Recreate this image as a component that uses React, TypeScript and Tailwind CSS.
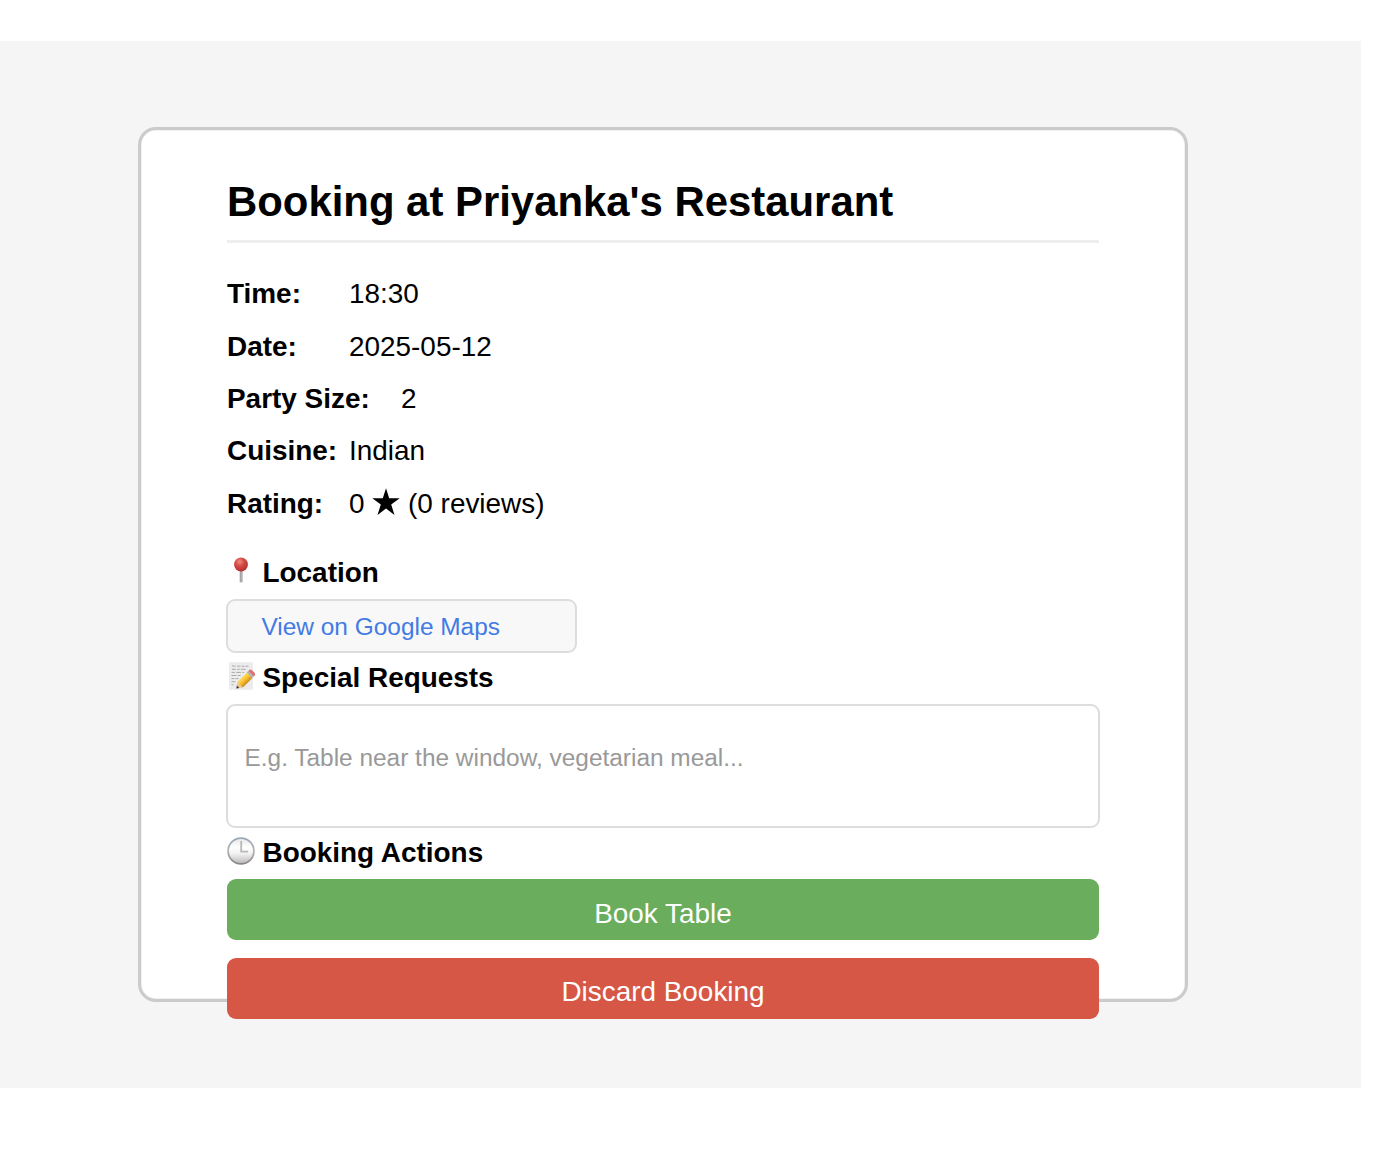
import type { ReactNode } from "react";

const details = [
  { label: "Time:", value: "18:30", wide: false },
  { label: "Date:", value: "2025-05-12", wide: false },
  { label: "Party Size:", value: "2", wide: true },
  { label: "Cuisine:", value: "Indian", wide: false },
];

function Row({ label, wide, children }: { label: string; wide?: boolean; children: ReactNode }) {
  return (
    <div className="flex h-[52.35px] items-center whitespace-pre">
      <dt className={wide ? "w-[174px] font-bold" : "w-[122px] font-bold"}>{label}</dt>
      <dd className="flex items-center">{children}</dd>
    </div>
  );
}

function Heading({ icon, children }: { icon: ReactNode; children: ReactNode }) {
  return (
    <h2 className="flex h-[49.5px] items-center font-bold">
      <span className="w-[35.5px] shrink-0">{icon}</span>
      {children}
    </h2>
  );
}

function PinIcon() {
  return (
    <svg width="28" height="28" viewBox="0 0 28 28" className="-translate-y-px">
      <defs>
        <radialGradient id="pin" cx="0.4" cy="0.3" r="0.7">
          <stop offset="0" stopColor="#ee8c84" />
          <stop offset="0.45" stopColor="#d54c46" />
          <stop offset="1" stopColor="#b5302f" />
        </radialGradient>
        <linearGradient id="needle">
          <stop offset="0" stopColor="#777" />
          <stop offset="0.5" stopColor="#ccc" />
          <stop offset="1" stopColor="#777" />
        </linearGradient>
      </defs>
      <path d="M12.8 12h2.6v12.5L14.1 26l-1.3-1.5z" fill="url(#needle)" />
      <circle cx="14" cy="7.5" r="6.9" fill="url(#pin)" />
    </svg>
  );
}

function MemoIcon() {
  return (
    <svg width="28" height="28" viewBox="0 0 28 28" className="-translate-y-px">
      <defs>
        <linearGradient id="pencil" x1="0" y1="0" x2="0" y2="1">
          <stop offset="0" stopColor="#ffdc60" />
          <stop offset="0.5" stopColor="#f8c02e" />
          <stop offset="1" stopColor="#c98a1c" />
        </linearGradient>
      </defs>
      <rect x="2" y="0.3" width="24" height="27.5" rx="0.6" fill="#ececec" />
      <path
        d="M5 4.2l1-.5 1 .6 1.5-.4M10 4.2h3.5m1 0h3m1 0h3M5 7.3h4m1.2 0h2.6m1 0h5M4.5 10.4h3.4m1.2 0h5m1.2 0h2M4.5 13.5h5m1.2 0h3M4.5 16.6h3m1 0h3M4.5 19.7h4M4.5 22.8h2"
        stroke="#aaa"
        strokeWidth="1"
        fill="none"
      />
      <g transform="translate(9.4 26.4) rotate(-45)">
        <path d="M0 0l5.5-3.9v7.8z" fill="#ecc796" />
        <path d="M0 0l2.4-1.7v3.4z" fill="#333" />
        <rect x="5.2" y="-3.9" width="13.5" height="7.8" fill="url(#pencil)" />
        <rect x="18.5" y="-3.9" width="2.2" height="7.8" fill="#adb4b8" />
        <path d="M20.7 -3.9h1.2q2 0 2 2v3.8q0 2-2 2h-1.2z" fill="#e0716e" />
      </g>
    </svg>
  );
}

function ClockIcon() {
  return (
    <svg width="28" height="28" viewBox="0 0 28 28" className="-translate-y-px">
      <defs>
        <linearGradient id="rim" x1="0" y1="0" x2="0" y2="1">
          <stop offset="0" stopColor="#9aa8b8" />
          <stop offset="0.5" stopColor="#b4b4b4" />
          <stop offset="1" stopColor="#8c8784" />
        </linearGradient>
        <linearGradient id="face" x1="0" y1="0" x2="0" y2="1">
          <stop offset="0" stopColor="#e4e6e8" />
          <stop offset="0.35" stopColor="#fff" />
          <stop offset="0.6" stopColor="#f2f2f2" />
          <stop offset="1" stopColor="#b8b8b8" />
        </linearGradient>
      </defs>
      <circle cx="14" cy="14" r="12.9" fill="url(#face)" stroke="url(#rim)" strokeWidth="1.8" />
      <path d="M14.2 4v10.6h6.8" fill="none" stroke="#b8b8b8" strokeWidth="1.8" />
    </svg>
  );
}

export default function App() {
  return (
    <div className="h-[1154px] bg-white pt-[41px] font-['Liberation_Sans',Arial,sans-serif] text-[27.92px] leading-none text-black">
      <main className="h-[1047px] w-[1361px] bg-[#f5f5f5] pt-[86px] pl-[138px]">
        <section className="h-[875px] w-[1050px] rounded-[18px] border-3 border-[#cbcbcb] bg-white px-[86px] pt-[47px] shadow-[inset_0_0_0_0.5px_#e4e4e4]">
          <h1 className="flex h-[66px] items-start border-b-3 border-[#eeeeee] text-[41.88px] leading-[49px] font-bold whitespace-nowrap">
            Booking at Priyanka's Restaurant
          </h1>
          <dl className="pt-[25px]">
            {details.map((d) => (
              <Row key={d.label} label={d.label} wide={d.wide}>{d.value}</Row>
            ))}
            <Row label="Rating:">
              <span>0 </span>
              <svg width="28" height="28" viewBox="0 0 28 28" className="-translate-y-0.5">
                <path d="M14 0.3l3.2 10h10.5l-8.5 6.3 3.3 10.3L14 20.5l-8.5 6.4 3.3-10.3L.3 10.3h10.5z" />
              </svg>
              <span> (0 reviews)</span>
            </Row>
          </dl>
          <div className="pt-[18px]">
            <Heading icon={<PinIcon />}>Location</Heading>
            <a className="mt-[2px] -ml-px flex h-[53.5px] w-[350.5px] items-center rounded-[9px] border-2 border-[#dddddd] bg-[#f8f8f8] pt-[2px] pl-[33.5px] text-[24.43px] text-[#437be3]">
              View on Google Maps
            </a>
            <Heading icon={<MemoIcon />}>Special Requests</Heading>
            <div className="-mx-px mt-[2px] flex h-[123.5px] items-center rounded-[9px] border-2 border-[#dddddd] pb-[16px] pl-[16.5px] text-[24.43px] text-[#999999]">
              E.g. Table near the window, vegetarian meal...
            </div>
            <Heading icon={<ClockIcon />}>Booking Actions</Heading>
            <div className="mt-[2px] flex flex-col gap-[18px] text-white">
              <button className="flex h-[61px] items-center justify-center rounded-[9px] bg-[#69ad5d] pt-[8px]">Book Table</button>
              <button className="flex h-[61px] items-center justify-center rounded-[9px] bg-[#d65745] pt-[7px]">Discard Booking</button>
            </div>
          </div>
        </section>
      </main>
    </div>
  );
}
